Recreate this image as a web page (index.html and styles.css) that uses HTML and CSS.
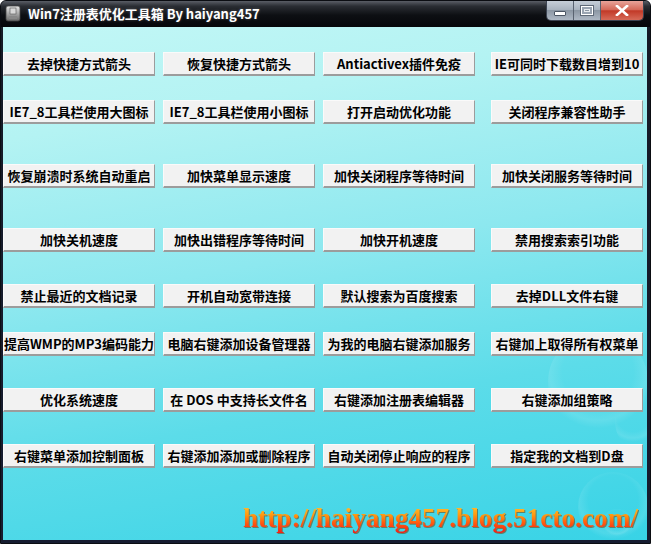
FILE: index.html
```html
<!DOCTYPE html>
<html lang="zh">
<head>
<meta charset="utf-8">
<title>Win7注册表优化工具箱 By haiyang457</title>
<link rel="stylesheet" href="styles.css">
</head>
<body>
<div class="window">
  <div class="titlebar">
    <svg class="appicon" width="16" height="17" viewBox="0 0 16 17">
      <defs>
        <linearGradient id="ig" x1="0" y1="0" x2="0" y2="1">
          <stop offset="0" stop-color="#e8e8e8"/>
          <stop offset="1" stop-color="#6a6a6a"/>
        </linearGradient>
      </defs>
      <rect x="1" y="1" width="14" height="15" rx="2" fill="url(#ig)" stroke="#444" stroke-width="0.8"/>
      <rect x="5" y="3" width="6" height="6" fill="#d8d8d8" stroke="#555" stroke-width="0.6"/>
      <path d="M4 11h8v3H4z" fill="#888"/>
    </svg>
    <span class="title">Win7注册表优化工具箱 By haiyang457</span>
    <div class="caption">
      <span class="cbtn min"><i></i></span>
      <span class="cbtn max"><i></i></span>
      <span class="cbtn close">
        <svg width="14" height="11" viewBox="0 0 14 11"><path d="M2 1l10 9M12 1L2 10" stroke="#fff" stroke-width="2.6" stroke-linecap="square"/></svg>
      </span>
    </div>
  </div>
  <div class="client">
    <span class="bubble b1"></span>
    <span class="bubble b2"></span>
    <span class="bubble b3"></span>
    <span class="bubble b4"></span>
    <div class="row r1">
      <div class="btn">去掉快捷方式箭头</div>
      <div class="btn">恢复快捷方式箭头</div>
      <div class="btn">Antiactivex插件免疫</div>
      <div class="btn">IE可同时下载数目增到10</div>
    </div>
    <div class="row r2">
      <div class="btn">IE7_8工具栏使用大图标</div>
      <div class="btn">IE7_8工具栏使用小图标</div>
      <div class="btn">打开启动优化功能</div>
      <div class="btn">关闭程序兼容性助手</div>
    </div>
    <div class="row r3">
      <div class="btn">恢复崩溃时系统自动重启</div>
      <div class="btn">加快菜单显示速度</div>
      <div class="btn">加快关闭程序等待时间</div>
      <div class="btn">加快关闭服务等待时间</div>
    </div>
    <div class="row r4">
      <div class="btn">加快关机速度</div>
      <div class="btn">加快出错程序等待时间</div>
      <div class="btn">加快开机速度</div>
      <div class="btn">禁用搜索索引功能</div>
    </div>
    <div class="row r5">
      <div class="btn">禁止最近的文档记录</div>
      <div class="btn">开机自动宽带连接</div>
      <div class="btn">默认搜索为百度搜索</div>
      <div class="btn">去掉DLL文件右键</div>
    </div>
    <div class="row r6">
      <div class="btn">提高WMP的MP3编码能力</div>
      <div class="btn">电脑右键添加设备管理器</div>
      <div class="btn">为我的电脑右键添加服务</div>
      <div class="btn">右键加上取得所有权菜单</div>
    </div>
    <div class="row r7">
      <div class="btn">优化系统速度</div>
      <div class="btn">在 DOS 中支持长文件名</div>
      <div class="btn">右键添加注册表编辑器</div>
      <div class="btn">右键添加组策略</div>
    </div>
    <div class="row r8">
      <div class="btn">右键菜单添加控制面板</div>
      <div class="btn">右键添加添加或删除程序</div>
      <div class="btn">自动关闭停止响应的程序</div>
      <div class="btn">指定我的文档到D盘</div>
    </div>
    <div class="footer">
      <span class="url">http://haiyang457.blog.51cto.com/</span>
    </div>
  </div>
</div>
</body>
</html>
```
FILE: styles.css
```css
html, body {
  margin: 0;
  padding: 0;
}
body {
  width: 651px;
  height: 544px;
  overflow: hidden;
  background: #fff;
}
.window {
  width: 651px;
  height: 544px;
  box-sizing: border-box;
  background: linear-gradient(to bottom, #2a2f3a 0%, #151a26 6%, #161c30 100%);
  border: 1px solid #0b0d12;
  border-radius: 6px 6px 0 0;
  display: flex;
  flex-direction: column;
  font-family: "Noto Sans CJK SC", "Liberation Sans", sans-serif;
}
.titlebar {
  height: 26px;
  display: flex;
  align-items: flex-start;
  position: relative;
  background: linear-gradient(to bottom, #5a5e66 0%, #2a2d33 20%, #0d0f13 55%, #06070a 100%);
  border-radius: 5px 5px 0 0;
}
.appicon {
  margin: 4px 0 0 4px;
}
.title {
  color: #fff;
  font-weight: bold;
  font-size: 13px;
  line-height: 16px;
  margin: 5px 0 0 7px;
  text-shadow: 0 0 3px rgba(255,255,255,0.25);
}
.caption {
  margin-left: auto;
  margin-right: 6px;
  display: flex;
  height: 19px;
  border: 1px solid #3c4452;
  border-top: none;
  border-radius: 0 0 5px 5px;
  overflow: hidden;
}
.cbtn {
  display: flex;
  align-items: center;
  justify-content: center;
  height: 19px;
}
.cbtn.min, .cbtn.max {
  width: 26px;
  background: linear-gradient(to bottom, #c6ced8 0%, #a9b3bf 45%, #8c97a4 50%, #aeb8c4 100%);
  border-right: 1px solid #596270;
}
.cbtn.min i {
  width: 10px;
  height: 3px;
  margin-top: 5px;
  background: #fff;
  border: 1px solid #4b5563;
  border-radius: 1px;
}
.cbtn.max i {
  width: 10px;
  height: 7px;
  border: 1px solid #fff;
  outline: 1px solid #606a78;
  box-shadow: inset 0 0 0 2px #9aa4b1, inset 0 0 0 3px #e8ecf0;
}
.cbtn.close {
  width: 42px;
  background: linear-gradient(to bottom, #e8a49a 0%, #d46a5a 45%, #c23a28 52%, #d66a58 100%);
}
.client {
  flex: 1;
  margin: 0 3px 3px 2px;
  position: relative;
  overflow: hidden;
  background: linear-gradient(170deg, #c2f7f6 0%, #b4f3f3 18%, #8de8ef 45%, #5cdce9 70%, #38d3e6 100%);
  display: flex;
  flex-direction: column;
  padding-top: 25px;
}
.bubble {
  position: absolute;
  border-radius: 50%;
  background: radial-gradient(circle at 50% 40%, rgba(255,255,255,0.0) 45%, rgba(255,255,255,0.10) 62%, rgba(255,255,255,0.0) 72%);
}
.b1 { left: 545px; top: 305px; width: 100px; height: 100px; }
.b2 { left: 575px; top: 445px; width: 70px; height: 70px; }
.b3 { left: 600px; top: 482px; width: 28px; height: 28px; }
.b4 { left: 612px; top: 365px; width: 36px; height: 56px; }
.row {
  display: flex;
  gap: 8px;
  position: relative;
}
.row .btn:nth-child(4) {
  margin-left: 8px;
}
.r2 { margin-top: 24px; }
.r3 { margin-top: 40px; }
.r4 { margin-top: 40px; }
.r5 { margin-top: 32px; }
.r6 { margin-top: 24px; }
.r7 { margin-top: 32px; }
.r8 { margin-top: 32px; }
.btn {
  width: 152px;
  height: 24px;
  box-sizing: border-box;
  background: #f2f2f2;
  border-top: 1px solid #fafafa;
  border-left: 1px solid #fafafa;
  border-right: 1px solid #9c9c9c;
  border-bottom: 2px solid #9c9c9c;
  display: flex;
  align-items: center;
  justify-content: center;
  font-size: 13px;
  font-weight: bold;
  color: #000;
  white-space: nowrap;
}
.footer {
  margin-top: auto;
  display: flex;
  justify-content: flex-end;
  padding: 0 9px 6px 0;
  position: relative;
}
.url {
  font-family: "Liberation Serif", serif;
  font-weight: bold;
  font-size: 27.3px;
  line-height: 32px;
  background: linear-gradient(to bottom, #ffd040 0%, #ff9a10 40%, #ff5a10 65%, #f01818 100%);
  -webkit-background-clip: text;
  background-clip: text;
  color: transparent;
  filter: drop-shadow(1px 1px 0 rgba(120,60,0,0.55));
}
```
